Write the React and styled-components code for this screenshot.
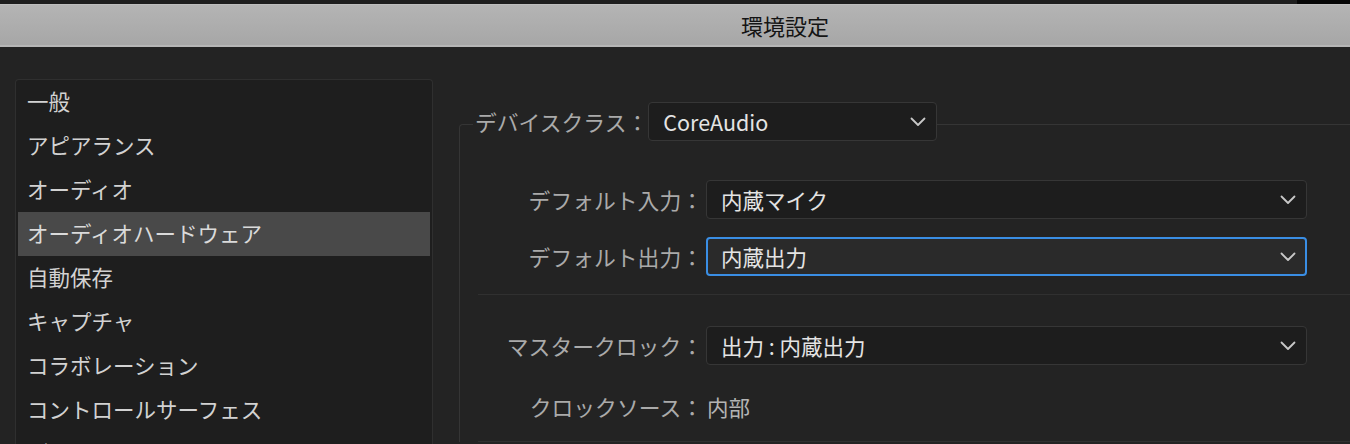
import React from "react";
import styled, { createGlobalStyle } from "styled-components";

const GlobalStyle = createGlobalStyle`
  html, body {
    margin: 0;
    padding: 0;
    background: #232323;
  }
  body {
    font-family: "Noto Sans CJK JP", "Noto Sans", sans-serif;
  }
`;

const Window = styled.div`
  height: 444px;
  display: flex;
  flex-direction: column;
  overflow: hidden;
  background: #232323;
`;

const TopStrip = styled.div`
  height: 4px;
  flex: none;
  background: linear-gradient(to right, #1e1e1e 0, #1e1e1e 1297px, #060606 1297px);
`;

const TitleBar = styled.div`
  height: 43px;
  flex: none;
  box-sizing: border-box;
  display: flex;
  align-items: center;
  justify-content: center;
  padding-left: 220px;
  background: linear-gradient(to bottom, #c8c8c8 0, #b4b4b4 1px, #a7a7a7 40px);
  border-bottom: 2px solid #b6b6b6;
  font-size: 22px;
  color: #141414;
`;

const Body = styled.div`
  flex: 1;
  min-height: 0;
  display: flex;
  padding: 32px 0 0 15px;
`;

// left category list
const Sidebar = styled.ul`
  width: 418px;
  flex: none;
  box-sizing: border-box;
  margin: 0;
  padding: 0 2px;
  list-style: none;
  background: #1e1e1e;
  border: 1px solid #2f2f2f;
  border-bottom: none;
  border-radius: 4px 4px 0 0;
`;

const NavItem = styled.li`
  height: 44px;
  box-sizing: border-box;
  display: flex;
  align-items: center;
  padding: 0 0 3px 9px;
  font-size: 21.5px;
  white-space: nowrap;
  color: ${(p) => (p.$active ? "#dadada" : "#d2d2d2")};
  background: ${(p) => (p.$active ? "#494949" : "transparent")};
`;

const Main = styled.div`
  flex: 1;
  min-width: 0;
  padding: 23px 0 0 26px;
`;

const Group = styled.fieldset`
  margin: 0 -20px 0 0;
  padding: 33px 0 0 0;
  border: 1px solid #353535;
  border-bottom: none;
  border-radius: 4px 0 0 0;
  min-width: 0;
`;

const Legend = styled.legend`
  margin-left: 13px;
  padding: 0 0 6px 2px;
`;

const LegendInner = styled.div`
  display: flex;
  align-items: center;
`;

const Label = styled.span`
  font-size: 21.8px;
  color: #aaaaaa;
  white-space: nowrap;
  text-align: right;
`;

const Row = styled.div`
  display: grid;
  grid-template-columns: 243px 601px;
  column-gap: 3px;
  align-items: center;
  height: 39px;
  margin-top: ${(p) => p.$gap || 0}px;
`;

const Divider = styled.div`
  height: 1px;
  background: #303030;
  margin: ${(p) => p.$top}px 0 ${(p) => p.$bottom}px 18px;
`;

const SelectBox = styled.div`
  box-sizing: border-box;
  height: 39px;
  width: ${(p) => (p.$width ? `${p.$width}px` : "auto")};
  display: flex;
  align-items: center;
  justify-content: space-between;
  padding: ${(p) => (p.$focused ? "0 9px 0 13px" : "0 10px 0 14px")};
  border: ${(p) => (p.$focused ? "2px solid #3a8ee4" : "1px solid #363636")};
  border-radius: 4px;
  background: ${(p) => (p.$focused ? "#2a2a2a" : "#1d1d1d")};
  color: #e4e4e4;
  font-size: 21.5px;
  white-space: nowrap;
`;

const Value = styled.span`
  font-size: 21.5px;
  color: #b4b4b4;
  padding-left: 1px;
`;

const Chevron = () => (
  <svg width="16" height="10" viewBox="0 0 16 10" fill="none">
    <polyline points="1.5,1.5 8,8 14.5,1.5" stroke="#c8c8c8" strokeWidth="1.8" strokeLinecap="round" strokeLinejoin="round" />
  </svg>
);

const Select = ({ value, focused, width }) => (
  <SelectBox $focused={focused} $width={width}>
    <span>{value}</span>
    <Chevron />
  </SelectBox>
);

const categories = [
  "一般",
  "アピアランス",
  "オーディオ",
  "オーディオハードウェア",
  "自動保存",
  "キャプチャ",
  "コラボレーション",
  "コントロールサーフェス",
  "デバイスコントロール",
];

export default function App() {
  return (
    <>
      <GlobalStyle />
      <Window>
        <TopStrip />
        <TitleBar>環境設定</TitleBar>
        <Body>
          <Sidebar>
            {categories.map((c) => (
              <NavItem key={c} $active={c === "オーディオハードウェア"}>
                {c}
              </NavItem>
            ))}
          </Sidebar>
          <Main>
            <Group>
              <Legend>
                <LegendInner>
                  <Label>デバイスクラス：</Label>
                  <Select value="CoreAudio" width={289} />
                </LegendInner>
              </Legend>
              <Row>
                <Label>デフォルト入力：</Label>
                <Select value="内蔵マイク" />
              </Row>
              <Row $gap={18}>
                <Label>デフォルト出力：</Label>
                <Select value="内蔵出力" focused />
              </Row>
              <Divider $top={18} $bottom={31} />
              <Row>
                <Label>マスタークロック：</Label>
                <Select value="出力 : 内蔵出力" />
              </Row>
              <Row $gap={22}>
                <Label>クロックソース：</Label>
                <Value>内部</Value>
              </Row>
              <Divider $top={15} $bottom={0} />
            </Group>
          </Main>
        </Body>
      </Window>
    </>
  );
}
